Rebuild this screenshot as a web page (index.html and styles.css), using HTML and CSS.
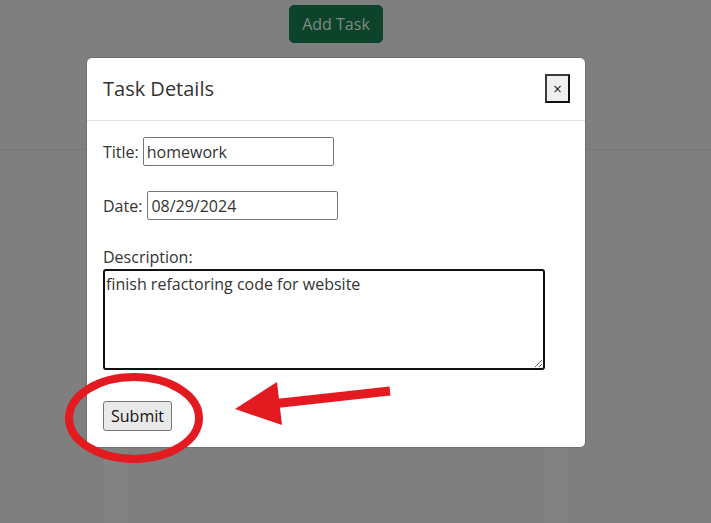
FILE: index.html
```html
<!DOCTYPE html>
<html lang="en">
<head>
<meta charset="utf-8">
<title>Tasks</title>
<link rel="stylesheet" href="styles.css">
</head>
<body>
<div class="page">
  <header class="topbar">
    <button class="add-btn" type="button">Add Task</button>
  </header>
  <main class="board">
    <div class="band"></div>
    <div class="band"></div>
  </main>

  <div class="modal">
    <div class="modal-header">
      <h5 class="modal-title">Task Details</h5>
      <button class="close-btn" type="button">×</button>
    </div>
    <form class="modal-body">
      <div class="field-row">
        <label class="lbl" for="title">Title:</label>
        <input class="txt" id="title" type="text" value="homework">
      </div>
      <div class="field-row row-date">
        <label class="lbl" for="date">Date:</label>
        <input class="txt" id="date" type="text" value="08/29/2024">
      </div>
      <label class="lbl desc-lbl" for="desc">Description:</label>
      <textarea class="desc" id="desc">finish refactoring code for website</textarea>
      <div class="submit-row">
        <button class="submit-btn" type="button">Submit</button>
      </div>
    </form>
  </div>

  <svg class="annot" width="711" height="523" viewBox="0 0 711 523" aria-hidden="true">
    <ellipse cx="134" cy="418" rx="65" ry="41" fill="none" stroke="#e31b20" stroke-width="8"/>
    <line x1="272" y1="404" x2="390" y2="391" stroke="#e31b20" stroke-width="9"/>
    <polygon points="235,409 277,382 282,425" fill="#e31b20"/>
  </svg>
</div>
</body>
</html>
```

FILE: styles.css
```css
html, body {
  margin: 0;
  padding: 0;
}
body {
  background: #7f7f7f;
  font-family: "Open Sans", "Liberation Sans", sans-serif;
  color: #333;
  width: 711px;
  height: 523px;
  overflow: hidden;
}
.page {
  position: relative;
  width: 711px;
  height: 523px;
}
.topbar {
  height: 150px;
  box-sizing: border-box;
  padding: 5px 0 0 289px;
  border-bottom: 1px solid #767676;
}
.add-btn {
  height: 38px;
  width: 94px;
  padding: 0 12px;
  border: 1px solid #0c432a;
  border-radius: 5px;
  background: #0c432a;
  color: #808a84;
  font-family: inherit;
  font-size: 16px;
  line-height: 24px;
}
.board {
  display: flex;
  gap: 416px;
  padding-left: 104px;
  height: 372px;
}
.band {
  width: 24px;
  background: #828282;
}
.modal {
  position: absolute;
  left: 86px;
  top: 57px;
  width: 500px;
  box-sizing: border-box;
  background: #fff;
  border: 1px solid #6f6f6f;
  border-radius: 6px;
}
.modal-header {
  display: flex;
  align-items: center;
  justify-content: space-between;
  padding: 0 15px 0 16px;
  border-bottom: 1px solid #dee2e6;
  height: 63px;
  box-sizing: border-box;
}
.modal-title {
  margin: 0;
  font-size: 20px;
  font-weight: 400;
  line-height: 30px;
  color: #333;
}
.close-btn {
  width: 25px;
  height: 29px;
  padding: 0;
  margin-top: -1px;
  background: #efefef;
  border: 2px solid;
  border-color: #3a3a3a #111 #111 #3a3a3a;
  font-family: "DejaVu Sans", sans-serif;
  font-size: 12px;
  color: #222;
  line-height: 1;
}
.modal-body {
  display: flex;
  flex-direction: column;
  align-items: flex-start;
  padding: 16px 15px 16px 16px;
  margin: 0;
}
.field-row {
  display: flex;
  align-items: center;
  gap: 4px;
  height: 29px;
}
.row-date {
  margin-top: 25px;
  gap: 5px;
}
.lbl {
  font-size: 16px;
  line-height: 22px;
  color: #333;
}
.txt {
  width: 191px;
  height: 29px;
  box-sizing: border-box;
  padding: 1px 3px;
  border: 1px solid #767676;
  border-radius: 2px;
  font-family: inherit;
  font-size: 16px;
  color: #333;
  background: #fff;
}
.desc-lbl {
  margin-top: 26px;
}
.desc {
  margin-top: 1px;
  width: 442px;
  height: 101px;
  box-sizing: border-box;
  padding: 2px 1px;
  border: 2px solid #111;
  border-radius: 3px;
  outline: none;
  font-family: inherit;
  font-size: 16px;
  line-height: 22px;
  color: #333;
  resize: both;
}
.submit-row {
  margin-top: 31px;
}
.submit-btn {
  display: block;
  height: 30px;
  width: 69px;
  padding: 0;
  background: #e9e9e9;
  border: 1px solid #767676;
  border-radius: 3px;
  font-family: inherit;
  font-size: 16px;
  color: #111;
}
.annot {
  position: absolute;
  left: 0;
  top: 0;
  pointer-events: none;
}
```
